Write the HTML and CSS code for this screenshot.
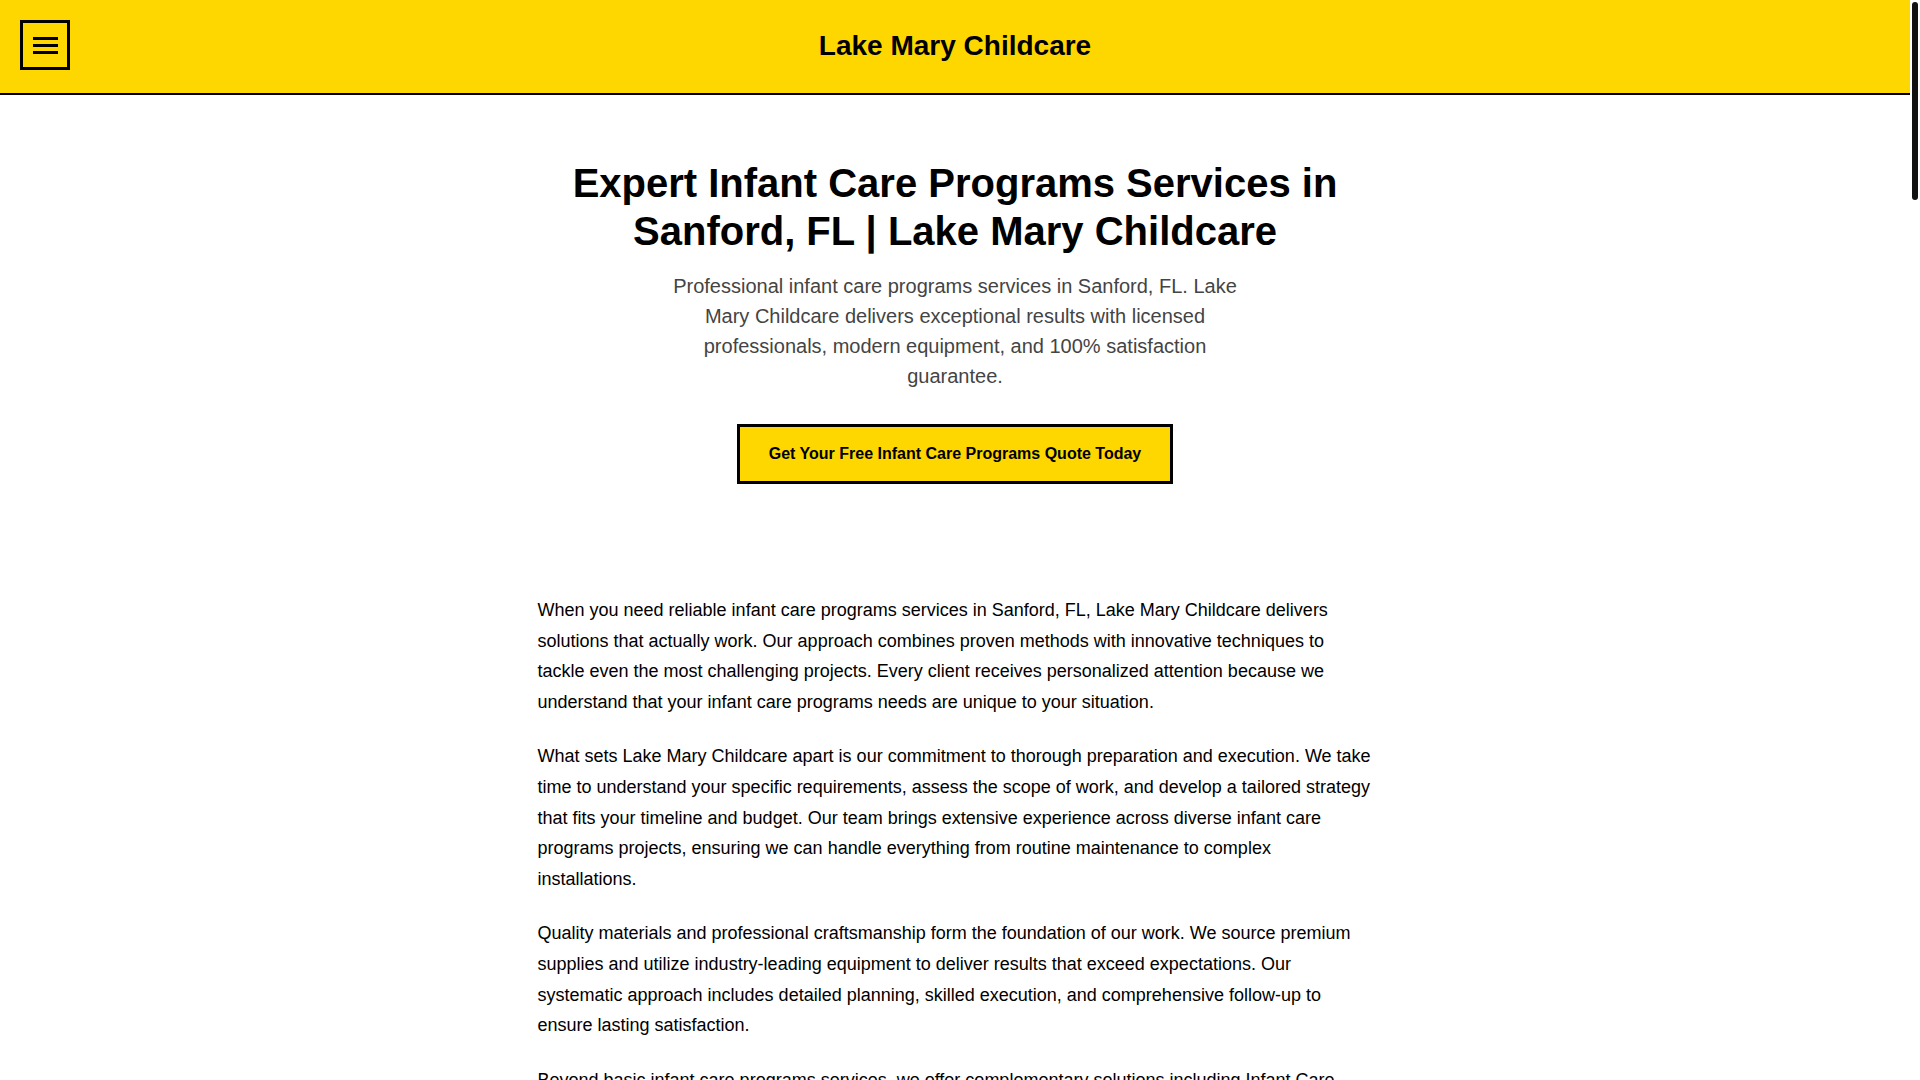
FILE: index.html
```html
<!DOCTYPE html>
<html lang="en">
<head>
<meta charset="utf-8">
<title>Expert Infant Care Programs Services in Sanford, FL | Lake Mary Childcare</title>
<link rel="stylesheet" href="styles.css">
</head>
<body>
<div class="page">
<header class="site-header">
  <button class="menu-btn" type="button" aria-label="Open menu">
    <svg class="menu-icon" viewBox="0 0 25 17" width="25" height="17" aria-hidden="true"><rect x="0" y="0" width="25" height="3"/><rect x="0" y="7" width="25" height="3"/><rect x="0" y="14" width="25" height="3"/></svg>
  </button>
  <div class="brand">Lake Mary Childcare</div>
  <div class="header-spacer"></div>
</header>

<main>
  <section class="hero">
    <h1 class="hero-title">Expert Infant Care Programs Services in Sanford, FL | Lake Mary Childcare</h1>
    <p class="hero-sub">Professional infant care programs services in Sanford, FL. Lake Mary Childcare delivers exceptional results with licensed professionals, modern equipment, and 100% satisfaction guarantee.</p>
    <a class="cta-btn" href="#contact">Get Your Free Infant Care Programs Quote Today</a>
  </section>

  <section class="content">
    <p>When you need reliable infant care programs services in Sanford, FL, Lake Mary Childcare delivers solutions that actually work. Our approach combines proven methods with innovative techniques to tackle even the most challenging projects. Every client receives personalized attention because we understand that your infant care programs needs are unique to your situation.</p>
    <p>What sets Lake Mary Childcare apart is our commitment to thorough preparation and execution. We take time to understand your specific requirements, assess the scope of work, and develop a tailored strategy that fits your timeline and budget. Our team brings extensive experience across diverse infant care programs projects, ensuring we can handle everything from routine maintenance to complex installations.</p>
    <p>Quality materials and professional craftsmanship form the foundation of our work. We source premium supplies and utilize industry-leading equipment to deliver results that exceed expectations. Our systematic approach includes detailed planning, skilled execution, and comprehensive follow-up to ensure lasting satisfaction.</p>
    <p>Beyond basic infant care programs services, we offer complementary solutions including Infant Care consultations, developmental assessments, and ongoing family support. This comprehensive approach means you can rely on a single trusted provider for all your related needs, saving time and ensuring consistency across every stage of your child's early development.</p>
    <p>Sanford families choose Lake Mary Childcare because we combine local knowledge with professional expertise. We understand the unique needs of families in our community and tailor our programs accordingly, from flexible scheduling to nutrition plans that match each infant's routine.</p>
    <p>Our caregivers are trained in infant CPR and first aid, and every classroom follows strict safety and sanitation standards. Parents receive daily updates on feeding, napping, and milestones, so you always know how your little one is growing.</p>

    <h2 class="section-title">Why Choose Lake Mary Childcare</h2>
    <div class="feature-grid">
      <div class="feature">
        <h3>Licensed Professionals</h3>
        <p>Every member of our team is licensed, background-checked, and trained in early childhood development, giving you peace of mind every day.</p>
      </div>
      <div class="feature">
        <h3>Modern Equipment</h3>
        <p>Our nurseries feature modern, age-appropriate furniture, sensory toys, and learning materials designed specifically for infants.</p>
      </div>
      <div class="feature">
        <h3>Satisfaction Guarantee</h3>
        <p>We stand behind our programs with a 100% satisfaction guarantee. If something isn't right, we'll work with you to make it right.</p>
      </div>
      <div class="feature">
        <h3>Flexible Scheduling</h3>
        <p>Full-time, part-time, and drop-in options let you choose the schedule that fits your family and your work life.</p>
      </div>
    </div>

    <h2 class="section-title">Our Infant Care Programs Process</h2>
    <ol class="steps">
      <li><strong>Initial Consultation.</strong> We meet with your family to learn about your infant's routine, preferences, and any special needs.</li>
      <li><strong>Personalized Plan.</strong> Our team prepares a care plan covering feeding, sleep, play, and developmental goals.</li>
      <li><strong>Gentle Transition.</strong> We help your baby settle in with a gradual transition schedule designed around comfort and trust.</li>
      <li><strong>Ongoing Communication.</strong> Regular check-ins and progress reviews keep you involved in every step of your child's growth.</li>
    </ol>

    <h2 class="section-title">Frequently Asked Questions</h2>
    <div class="faq">
      <div class="faq-item">
        <h3>What ages do your infant care programs serve?</h3>
        <p>Our infant programs welcome babies from 6 weeks through 12 months, with seamless transition into our toddler classrooms.</p>
      </div>
      <div class="faq-item">
        <h3>How do I schedule a tour?</h3>
        <p>Contact us by phone or through the form below to schedule a visit. We're happy to answer your questions and show you our infant rooms.</p>
      </div>
    </div>
  </section>

  <section class="contact" id="contact">
    <h2 class="section-title">Request Your Free Quote</h2>
    <p>Tell us a little about your family and we'll get back to you within one business day.</p>
    <form class="contact-form">
      <label>Name<input type="text" name="name"></label>
      <label>Email<input type="email" name="email"></label>
      <label>Message<textarea name="message" rows="5"></textarea></label>
      <button class="cta-btn" type="button">Send Request</button>
    </form>
  </section>
</main>

<footer class="site-footer">
  <div class="footer-brand">Lake Mary Childcare</div>
  <p>Infant Care Programs in Sanford, FL</p>
  <p>&copy; 2024 Lake Mary Childcare. All rights reserved.</p>
</footer>
</div>
<aside class="scroll-track" aria-hidden="true"><div class="scroll-thumb"></div></aside>
</body>
</html>
```

FILE: styles.css
```css
body {
  margin: 0;
  display: grid;
  grid-template-columns: minmax(0, 1fr) 10px;
  align-items: start;
  font-family: "Liberation Sans", Arial, Helvetica, sans-serif;
  color: #111;
  background: #fff;
}

.page {
  min-width: 0;
}

.scroll-track {
  position: sticky;
  top: 0;
  height: 100vh;
  background: #fff;
}

.scroll-thumb {
  width: 6px;
  height: 198px;
  margin: 2px 2px 0;
  border-radius: 3px;
  background: #111;
}

.site-header {
  display: grid;
  grid-template-columns: 1fr auto 1fr;
  align-items: center;
  padding: 20px 20px 23px;
  background: #ffd700;
  border-bottom: 2px solid #000;
}

.menu-btn {
  justify-self: start;
  width: 50px;
  height: 50px;
  padding: 0;
  margin: 0;
  display: flex;
  align-items: center;
  justify-content: center;
  background: transparent;
  border: 3px solid #000;
  box-sizing: border-box;
  cursor: pointer;
}

.menu-icon {
  display: block;
  fill: #000;
}

.brand {
  font-size: 28px;
  font-weight: 700;
  color: #000;
  line-height: 1.2;
  padding-top: 2px;
}

.hero {
  padding: 64px 20px 64px;
  text-align: center;
}

.hero-title {
  max-width: 800px;
  margin: 0 auto 16px;
  font-size: 40px;
  line-height: 1.2;
  font-weight: 700;
  color: #000;
}

.hero-sub {
  max-width: 600px;
  margin: 0 auto 33px;
  font-size: 20px;
  line-height: 1.5;
  color: #444;
}

.cta-btn {
  display: inline-block;
  padding: 18px 29px;
  background: #ffd700;
  border: 3px solid #000;
  color: #000;
  font-family: inherit;
  font-size: 16px;
  font-weight: 700;
  line-height: 18px;
  text-decoration: none;
  cursor: pointer;
}

.content {
  max-width: 835px;
  margin: 0 auto;
  padding: 47px 20px 40px;
}

.content p {
  margin: 0 0 24px;
  font-size: 18px;
  line-height: 1.7;
  color: #000;
}

.section-title {
  margin: 56px 0 24px;
  font-size: 30px;
  line-height: 1.2;
  color: #000;
}

.feature-grid {
  display: grid;
  grid-template-columns: repeat(2, 1fr);
  gap: 24px;
}

.feature {
  padding: 24px;
  border: 3px solid #000;
  background: #fffbe0;
}

.feature h3,
.faq-item h3 {
  margin: 0 0 12px;
  font-size: 20px;
  color: #000;
}

.feature p {
  margin: 0;
  font-size: 17px;
  line-height: 1.6;
}

.steps {
  margin: 0 0 24px;
  padding-left: 28px;
  font-size: 18px;
  line-height: 1.7;
}

.steps li {
  margin-bottom: 12px;
}

.faq-item {
  padding: 20px 0;
  border-bottom: 2px solid #000;
}

.faq-item p {
  margin: 0;
}

.contact {
  max-width: 835px;
  margin: 0 auto;
  padding: 20px 20px 80px;
}

.contact p {
  font-size: 18px;
  line-height: 1.7;
}

.contact-form {
  display: flex;
  flex-direction: column;
  gap: 18px;
}

.contact-form label {
  display: flex;
  flex-direction: column;
  gap: 8px;
  font-size: 16px;
  font-weight: 700;
}

.contact-form input,
.contact-form textarea {
  padding: 12px;
  border: 2px solid #000;
  font-family: inherit;
  font-size: 16px;
}

.contact-form .cta-btn {
  align-self: flex-start;
}

.site-footer {
  padding: 48px 20px 60px;
  background: #111;
  color: #fff;
  text-align: center;
}

.footer-brand {
  font-size: 24px;
  font-weight: 700;
  color: #ffd700;
  margin-bottom: 12px;
}

.site-footer p {
  margin: 6px 0;
  font-size: 16px;
}
```
